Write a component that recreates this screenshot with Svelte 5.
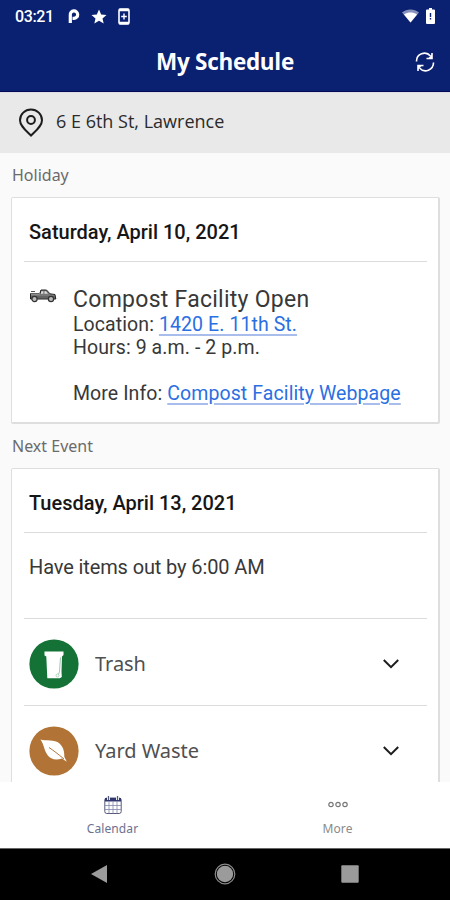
<script lang="ts">
  const pickups = [
    { name: 'Trash', icon: 'cart' },
    { name: 'Yard Waste', icon: 'leaf' }
  ];

  let active = $state('Calendar');
  let expanded = $state<string | null>(null);

  function toggle(name: string) {
    expanded = expanded === name ? null : name;
  }
</script>

<div class="screen">
  <div class="status-bar">
    <span class="clock">03:21</span>
    <svg class="parking" width="14" height="16" viewBox="0 0 14 16">
      <path d="M3.300 15V7a3.700 3.700 0 113.700 3.300H5.500" fill="none" stroke="#fff" stroke-width="3.200" />
    </svg>
    <svg class="star" width="16" height="15" viewBox="0 0 16 15">
      <path d="M8 .5l2.200 4.900 5.300.5-4 3.500 1.200 5.100L8 11.800l-4.700 2.700 1.200-5.100-4-3.500 5.300-.5z" fill="#fff" />
    </svg>
    <svg class="saver" width="12" height="17" viewBox="0 0 12 17">
      <rect x="1" y="1" width="10" height="15" rx="1.500" fill="none" stroke="#fff" stroke-width="1.600" />
      <path d="M1 2h10M1 15h10" stroke="#fff" stroke-width="2.600" />
      <path d="M6 5.500v6M3.200 8.500h5.600" stroke="#fff" stroke-width="1.400" />
    </svg>
    <span class="spacer"></span>
    <svg class="wifi" width="17" height="14" viewBox="0 0 17 14">
      <path d="M0 3.400C5-.6 12-.6 17 3.400L8.500 13.500z" fill="#8791bc" />
      <path d="M2 5.400C6 3 11 3 15 5.400l-6.500 8z" fill="#fff" />
    </svg>
    <svg class="battery" width="9" height="16" viewBox="0 0 9 16">
      <path d="M3 0h3v1.600h2a1 1 0 011 1V15a1 1 0 01-1 1H1a1 1 0 01-1-1V2.600a1 1 0 011-1h2z" fill="#fff" />
      <path d="M4.500 5v4M4.500 10v1.500" stroke="#0a2070" stroke-width="1.400" />
    </svg>
  </div>

  <header class="app-bar">
    <h1>My Schedule</h1>
    <button type="button" class="refresh" aria-label="Refresh">
      <svg width="20" height="20" viewBox="0 0 20 20" fill="none" stroke="#fff" stroke-width="1.600">
        <path d="M1.500 9.500A8 8 0 0115.500 4" />
        <path d="M18.500 10.500A8 8 0 014.500 16" />
        <path d="M17 1v5.500h-5.500" />
        <path d="M3 19v-5.500h5.500" />
        <path d="M17 2.500v4h-4zM3 17.500v-4h4z" fill="#fff" stroke="none" />
      </svg>
    </button>
  </header>

  <div class="address">
    <svg width="26" height="30" viewBox="0 0 26 30" fill="none" stroke="#1d1d1d" stroke-width="2">
      <path d="M13 27.500C8 22.500 2 18 2 12.200a11 10.700 0 0122 0C24 18 18 22.500 13 27.500z" />
      <circle cx="13" cy="12" r="3.900" />
    </svg>
    <span>6 E 6th St, Lawrence</span>
  </div>

  <main>
    <h2>Holiday</h2>
    <section class="card holiday">
      <h3>Saturday, April 10, 2021</h3>
      <div class="event">
        <svg width="28" height="14" viewBox="0 0 28 14">
          <path d="M1 5.500h9L11.500 1h6l3.500 4 5 .8 1 4.200H1z" fill="#777" />
          <path d="M1 4.800h9M11 4.500L12 1h5.500L21 4.800l5 .7.800 4.500H1.500V5" fill="none" stroke="#222" stroke-width="1" />
          <path d="M12.300 2.200h2v2.500h-2.500zM15.500 2.200H17l2 2.500h-3.500z" fill="#ddd" />
          <path d="M2 2.500h4M2 8h24" stroke="#555" stroke-width="1" />
          <circle cx="5.500" cy="10" r="2.600" fill="#bbb" stroke="#333" stroke-width="1.200" />
          <circle cx="22" cy="10" r="2.600" fill="#bbb" stroke="#333" stroke-width="1.200" />
        </svg>
        <div class="details">
          <h4>Compost Facility Open</h4>
          <p>Location: <a class="map" href="#map">1420 E. 11th St.</a></p>
          <p class="hours">Hours: 9 a.m. - 2 p.m.</p>
          <p class="more-info">More Info: <a href="#info">Compost Facility Webpage</a></p>
        </div>
      </div>
    </section>

    <h2 class="next">Next Event</h2>
    <section class="card upcoming">
      <h3>Tuesday, April 13, 2021</h3>
      <p class="reminder">Have items out by 6:00 AM</p>
      {#each pickups as pickup}
        <button
          type="button"
          class="pickup"
          aria-expanded={expanded === pickup.name}
          onclick={() => toggle(pickup.name)}
        >
          <svg class="badge" width="50" height="50" viewBox="0 0 50 50">
            {#if pickup.icon === 'cart'}
              <circle cx="25" cy="25" r="24.600" fill="#147236" />
              <path
                d="M15.500 12.500h19v3.500l-1.500 1.500-.5 15 .3 5.500-2 1.200H18.300L17.300 17.500l-1.800-1z"
                fill="#fff"
              />
              <path d="M31.500 18.500l-1 14-1 3" fill="none" stroke="#147236" stroke-width=".4" />
              <circle cx="28.500" cy="36.500" r="1.500" fill="#fff" stroke="#8ab99a" stroke-width=".6" />
            {:else}
              <circle cx="25" cy="25" r="24.600" fill="#b17436" />
              <path
                d="M11.500 13.500c5 1.500 14-.5 19 4 4 3.800 5 8.500 4.800 13.300l2.500 5-4.800-3.300c-6 1.800-11.500 1-14.500-3.500-3.500-5-3.500-10.500-7-15.500z"
                fill="#fff"
              />
              <path d="M20 21.500c4.500 3 9 6.500 15 11.500" fill="none" stroke="#b17436" stroke-width="1" />
            {/if}
          </svg>
          <span>{pickup.name}</span>
          <svg class="chevron" width="18" height="12" viewBox="0 0 18 12" fill="none">
            <path d="M1.800 2l7.200 7.200L16.200 2" stroke="#1c1c1c" stroke-width="2" />
          </svg>
        </button>
      {/each}
    </section>
  </main>

  <nav class="tabs">
    <button type="button" class:active={active === 'Calendar'} onclick={() => (active = 'Calendar')}>
      <svg width="18" height="20" viewBox="0 0 18 20" fill="none">
        <rect x=".8" y="3" width="16.400" height="15.500" rx="2" stroke="#555a78" />
        <path d="M1 3h16v3.500H1z" fill="#30386f" />
        <path d="M1 10.500h16M1 14.500h16M5 6.500v12M9 6.500v12M13 6.500v12" stroke="#8288a8" stroke-width=".8" />
        <path d="M4.500 1v4M13.500 1v4" stroke="#fff" stroke-width="3" />
        <path d="M4.500 1v4M13.500 1v4" stroke="#555a78" stroke-width="1.300" />
      </svg>
      <span>Calendar</span>
    </button>
    <button type="button" class:active={active === 'More'} onclick={() => (active = 'More')}>
      <svg width="20" height="20" viewBox="0 0 20 20" fill="none" stroke="#777" stroke-width="1.200">
        <circle cx="3" cy="9.500" r="2.200" />
        <circle cx="10" cy="9.500" r="2.200" />
        <circle cx="17" cy="9.500" r="2.200" />
      </svg>
      <span>More</span>
    </button>
  </nav>

  <div class="system-nav">
    <svg width="18" height="20" viewBox="0 0 18 20">
      <path d="M0 10L16 1v18z" fill="#9b9b9b" />
    </svg>
    <svg width="22" height="22" viewBox="0 0 22 22">
      <circle cx="11" cy="11" r="9.800" fill="none" stroke="#8c8c8c" stroke-width="1.200" />
      <circle cx="11" cy="11" r="8.200" fill="#9b9b9b" />
    </svg>
    <svg width="18" height="18" viewBox="0 0 18 18">
      <rect x=".3" y=".3" width="17.400" height="17.400" rx="1" fill="#9b9b9b" />
    </svg>
  </div>
</div>

<style>
  :global(body) {
    margin: 0;
  }

  .screen {
    display: flex;
    flex-direction: column;
    width: 450px;
    height: 900px;
    overflow: hidden;
    background: #fafafa;
    color: #383838;
    font-family: Roboto, sans-serif;
  }

  h1,
  h2,
  h3,
  h4,
  p {
    margin: 0;
  }

  button {
    padding: 0;
    border: 0;
    background: none;
    color: inherit;
    font: inherit;
    cursor: pointer;
  }

  svg {
    display: block;
    flex-shrink: 0;
  }

  .status-bar {
    display: flex;
    align-items: center;
    flex-shrink: 0;
    box-sizing: border-box;
    height: 32px;
    padding: 0 15px;
    background: #0a2070;
    color: #fff;
  }

  .clock {
    width: 39px;
    font-size: 16px;
    font-weight: 500;
    letter-spacing: -0.4px;
    white-space: nowrap;
  }

  .parking {
    margin-left: 13px;
  }

  .star {
    margin-left: 10px;
  }

  .saver {
    margin-left: 11px;
  }

  .spacer {
    flex: 1;
  }

  .battery {
    margin-left: 7px;
  }

  .app-bar {
    display: grid;
    grid-template-columns: 1fr auto 1fr;
    align-items: center;
    flex-shrink: 0;
    box-sizing: border-box;
    height: 60px;
    padding: 0 15px;
    border-bottom: 1px solid #050a58;
    background: #0a2070;
    color: #fff;
  }

  h1 {
    grid-column: 2;
    font: 700 22.500px/30px 'Open Sans', sans-serif;
    letter-spacing: -0.3px;
  }

  .refresh {
    justify-self: end;
  }

  .address {
    display: flex;
    align-items: center;
    gap: 12px;
    flex-shrink: 0;
    box-sizing: border-box;
    height: 61px;
    padding: 0 18px;
    border-top: 1px solid #dedee4;
    background: #e9e9e9;
    color: #2b2b2b;
    font: 18px/24px 'Open Sans', sans-serif;
  }

  .address span {
    padding-bottom: 4px;
  }

  main {
    flex: 1;
    min-height: 0;
    overflow: hidden;
    padding: 0 10px 0 11px;
  }

  h2 {
    height: 44px;
    padding-left: 1px;
    color: #6b6b6b;
    font: 400 16px/44px 'Noto Sans', sans-serif;
  }

  .card {
    box-sizing: border-box;
    padding: 0 11px 0 12px;
    border: 1px solid #dedede;
    border-width: 1px 2px 2px 1px;
    border-radius: 2px;
    background: #fff;
  }

  .holiday {
    height: 227px;
  }

  .upcoming {
    height: 400px;
  }

  h3 {
    height: 63px;
    padding-left: 5px;
    border-bottom: 1px solid #dcdcdc;
    color: #161616;
    font-size: 20px;
    font-weight: 500;
    line-height: 68px;
  }

  .event {
    display: flex;
    gap: 16px;
    padding: 25px 0 0 5px;
  }

  .event svg {
    margin-top: 2px;
  }

  .details {
    white-space: nowrap;
  }

  h4 {
    font-size: 23px;
    font-weight: 400;
    line-height: 26px;
    letter-spacing: 0.27px;
  }

  .details p {
    font-size: 19.500px;
    line-height: 23px;
    letter-spacing: 0.09px;
  }

  .details .more-info {
    margin-top: 23px;
  }

  a {
    color: #2a70e2;
    text-decoration-color: #a9bdec;
    text-decoration-thickness: 1.500px;
    text-underline-offset: 3px;
  }

  .reminder {
    height: 85px;
    padding-left: 5px;
    border-bottom: 1px solid #dcdcdc;
    font-size: 20px;
    line-height: 68px;
    letter-spacing: -0.12px;
  }

  .pickup {
    display: flex;
    align-items: center;
    box-sizing: border-box;
    width: 100%;
    height: 87px;
    padding: 3px 27px 0 5px;
    border-bottom: 1px solid #dcdcdc;
    color: #505050;
    font: 20px/28px 'Noto Sans', sans-serif;
    letter-spacing: -0.05px;
  }

  .pickup span {
    flex: 1;
    margin-left: 16px;
    text-align: left;
  }

  .tabs {
    display: grid;
    grid-template-columns: 1fr 1fr;
    flex-shrink: 0;
    height: 66px;
    background: #fff;
    color: #8a8a8a;
  }

  .tabs button {
    display: flex;
    flex-direction: column;
    align-items: center;
    padding-top: 13px;
    font: 12px/18px 'Noto Sans', sans-serif;
    letter-spacing: 0.1px;
  }

  .tabs span {
    margin-top: 5px;
  }

  .tabs .active {
    color: #6c7191;
  }

  .system-nav {
    display: flex;
    align-items: center;
    justify-content: space-between;
    flex-shrink: 0;
    box-sizing: border-box;
    height: 52px;
    padding: 0 91px 2px;
    border-top: 1px solid #666;
    background: #000;
  }
</style>
